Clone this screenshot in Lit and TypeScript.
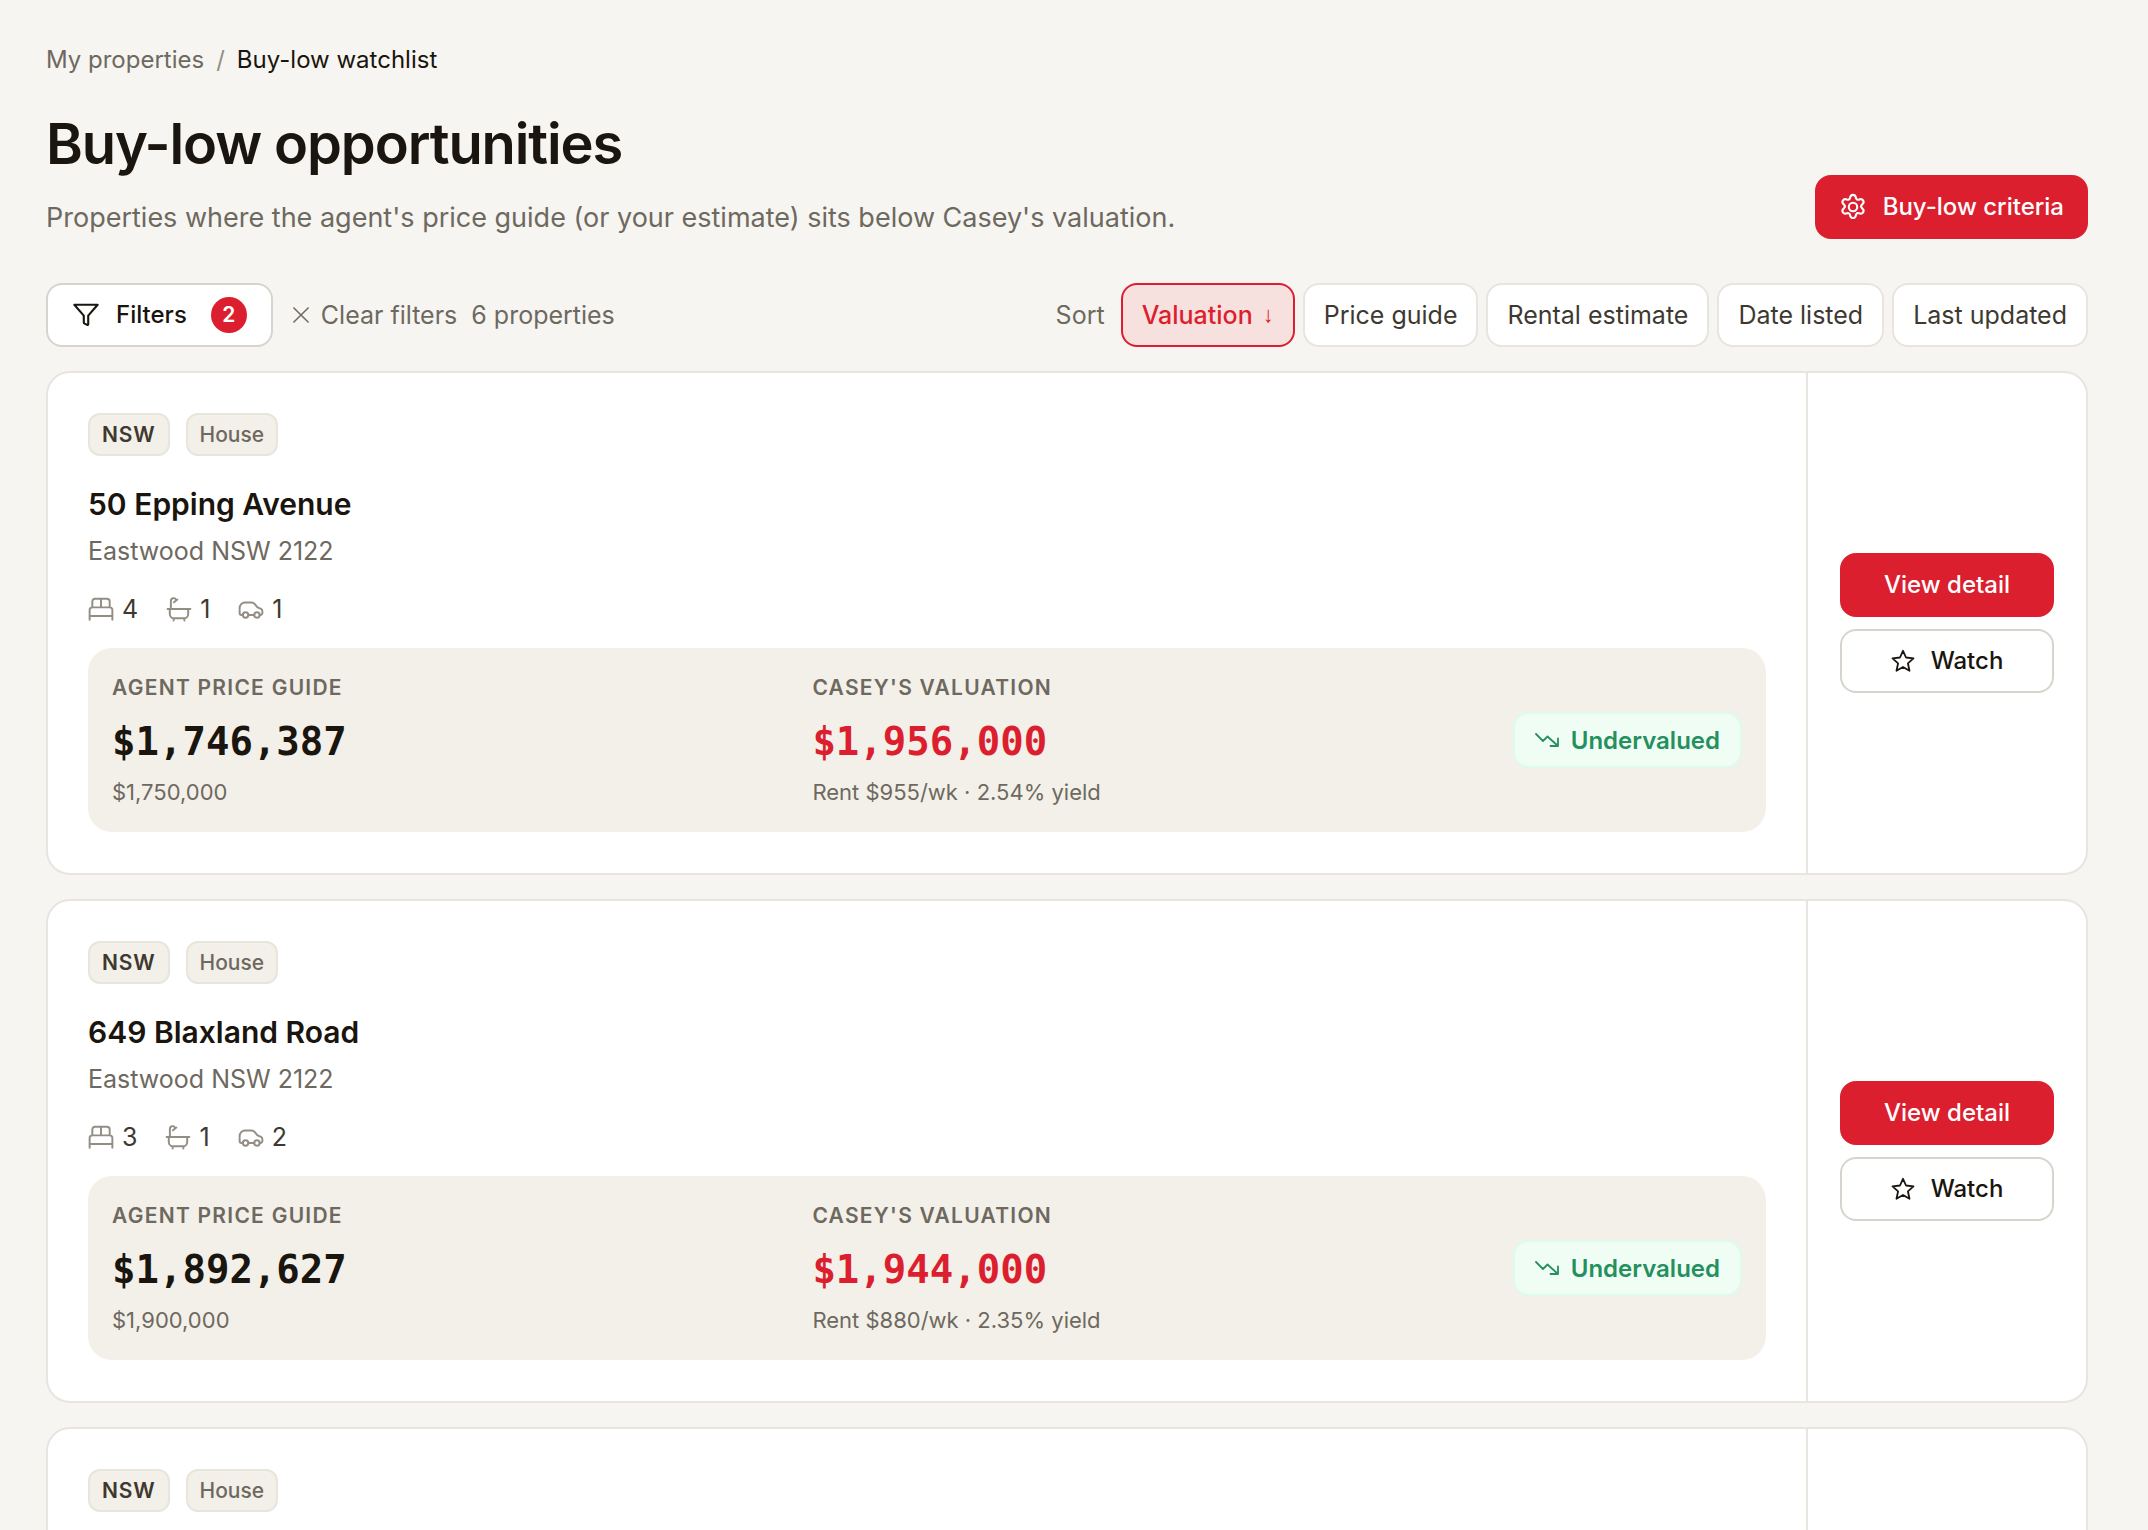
import { LitElement, html, css, svg } from "lit";
import { customElement, property, state } from "lit/decorators.js";

interface Listing {
  id: number;
  region: string;
  kind: string;
  street: string;
  locality: string;
  beds: number;
  baths: number;
  cars: number;
  guide: string;
  guideText: string;
  valuation: string;
  rent: string;
}

const LISTINGS: Listing[] = [
  { id: 1, region: "NSW", kind: "House", street: "50 Epping Avenue", locality: "Eastwood NSW 2122", beds: 4, baths: 1, cars: 1, guide: "$1,746,387", guideText: "$1,750,000", valuation: "$1,956,000", rent: "Rent $955/wk · 2.54% yield" },
  { id: 2, region: "NSW", kind: "House", street: "649 Blaxland Road", locality: "Eastwood NSW 2122", beds: 3, baths: 1, cars: 2, guide: "$1,892,627", guideText: "$1,900,000", valuation: "$1,944,000", rent: "Rent $880/wk · 2.35% yield" },
  { id: 3, region: "NSW", kind: "House", street: "", locality: "", beds: 0, baths: 0, cars: 0, guide: "", guideText: "", valuation: "", rent: "" },
];

const SORTS = ["Valuation", "Price guide", "Rental estimate", "Date listed", "Last updated"];

const ICONS = {
  filter: svg`<path d="M2 3.2h20L13.900 12.500v7.300c0 .6-.4.900-.9.700l-2.200-1.100c-.4-.2-.7-.6-.7-1v-5.900z"/>`,
  close: svg`<path d="M3.500 3.500l17 17M20.500 3.500l-17 17"/>`,
  gear: svg`<circle cx="12" cy="12" r="3.6"/><path d="M9.6 3.6c.3-1.2 1.200-2 2.400-2s2.100.8 2.400 2l.2.800c.3 1 1.300 1.600 2.300 1.300l.9-.3c1.200-.3 2.300.1 2.900 1.100s.4 2.200-.5 3l-.6.600c-.8.8-.8 2 0 2.800l.6.600c.9.800 1.100 2 .5 3s-1.700 1.400-2.900 1.100l-.9-.3c-1-.3-2 .3-2.300 1.300l-.2.800c-.3 1.200-1.200 2-2.400 2s-2.100-.8-2.400-2l-.2-.8c-.3-1-1.300-1.600-2.300-1.300l-.9.300c-1.200.3-2.300-.1-2.900-1.100s-.4-2.200.5-3l.6-.6c.8-.8.8-2 0-2.800l-.6-.6c-.9-.8-1.100-2-.5-3s1.700-1.400 2.900-1.100l.9.300c1 .3 2-.3 2.300-1.300z"/>`,
  bed: svg`<path d="M1.500 22v-9a2.500 2.500 0 0 1 2.500-2.500h16a2.500 2.500 0 0 1 2.500 2.500v9M1.500 18.500h21M4 10.500V5a2.500 2.500 0 0 1 2.500-2.500h11A2.500 2.500 0 0 1 20 5v5.500M12 2.500v8"/>`,
  bath: svg`<path d="M1.500 12h21M3.500 12v4.500a4 4 0 0 0 4 4h9a4 4 0 0 0 4-4V12M7 20.500v2.200M17 20.500v2.200M4.500 12V4.500a2.500 2.500 0 0 1 4.800-1M7.300 5.800l3.200-2.500"/>`,
  car: svg`<circle cx="7" cy="17.500" r="2.500"/><circle cx="17.500" cy="17.500" r="2.500"/><path d="M4.500 17.500H3.300a1.800 1.800 0 0 1-1.800-1.800V11a5 5 0 0 1 5-5h6a4 4 0 0 1 3 1.400L18 10.500l2.800 1.100a2.600 2.600 0 0 1 1.700 2.400v1.700a1.800 1.800 0 0 1-1.800 1.800H20M9.500 17.500h5.500"/>`,
  trend: svg`<path d="M1 6l7 7 4.500-4.500L23 18M15.500 18H23v-7.500"/>`,
  star: svg`<path d="M12 1.800l3 6.700 7.500.8-5.600 5 1.600 7.500-6.500-3.800-6.500 3.800 1.600-7.500-5.600-5 7.500-.8z"/>`,
};

@customElement("ui-icon")
export class UiIcon extends LitElement {
  @property() name: keyof typeof ICONS = "filter";

  static styles = css`
    :host { display: inline-flex; flex: none; }
    svg { width: 24px; height: 24px; fill: none; stroke: currentColor; stroke-width: 1.8; stroke-linecap: round; stroke-linejoin: round; }
    :host([size="small"]) svg { width: 20px; height: 20px; }
    :host([size="medium"]) svg { width: 26px; height: 26px; }
    :host([size="large"]) svg { width: 28px; height: 28px; }
  `;

  render() {
    return html`<svg viewBox="0 0 24 24" aria-hidden="true">${ICONS[this.name]}</svg>`;
  }
}

const buttonStyles = css`
  button, .button {
    box-sizing: border-box;
    height: 64px;
    margin: 0;
    display: inline-flex;
    align-items: center;
    justify-content: center;
    border: 2px solid #d8d4cd;
    border-radius: 16px;
    background: #fff;
    color: #1a150e;
    font: 500 24px/32px Inter, sans-serif;
    text-decoration: none;
    white-space: nowrap;
    cursor: pointer;
  }
  .primary { background: #dc1f2e; border-color: #dc1f2e; color: #fff; }
`;

@customElement("listing-card")
export class ListingCard extends LitElement {
  @property({ attribute: false }) listing!: Listing;
  @state() private watched = false;

  static styles = [buttonStyles, css`
    :host { display: block; }
    .card {
      display: flex;
      min-height: 500px;
      border: 2px solid #e8e4de;
      border-radius: 24px;
      background: #fff;
    }
    .main { flex: 1; min-width: 0; padding: 40px; }
    .tags { display: flex; gap: 16px; }
    .tag {
      box-sizing: border-box;
      height: 43px;
      padding: 0 12px;
      border: 2px solid #e8e4de;
      border-radius: 12px;
      background: #f3f0e9;
      color: #6e695f;
      font-size: 21px;
      line-height: 39px;
      font-weight: 500;
    }
    .region { color: #3e3930; font-weight: 600; letter-spacing: 0.04em; }
    h2 { margin: 28px 0 0; font-size: 30px; line-height: 40px; font-weight: 600; color: #1a150e; }
    .locality { margin: 8px 0 0; font-size: 25px; line-height: 38px; color: #6e695f; }
    .facts { display: flex; gap: 28px; margin: 20px 0 0; padding: 0; list-style: none; }
    .facts li { display: flex; align-items: center; gap: 8px; font-size: 25px; line-height: 38px; color: #3e3930; }
    .facts ui-icon { color: #938e83; }
    .panel {
      display: grid;
      grid-template-columns: 1fr 1fr auto;
      align-items: center;
      gap: 24px;
      margin-top: 20px;
      padding: 24px;
      border-radius: 24px;
      background: #f3f0e9;
    }
    .label { font-size: 21px; line-height: 32px; font-weight: 600; letter-spacing: 0.06em; text-transform: uppercase; color: #6e695f; }
    .amount { margin-top: 12px; font: 700 39px/52px Menlo, "DejaVu Sans Mono", monospace; color: #1a150e; }
    .valuation { color: #dc1f2e; }
    .note { margin-top: 8px; font-size: 22px; line-height: 32px; color: #6e695f; }
    .badge {
      display: flex;
      align-items: center;
      gap: 12px;
      box-sizing: border-box;
      height: 56px;
      padding: 0 20px;
      border: 2px solid #dcfce9;
      border-radius: 16px;
      background: #f0fdf5;
      color: #23905e;
      font-size: 24px;
      font-weight: 600;
    }
    .actions {
      box-sizing: border-box;
      width: 280px;
      display: flex;
      flex-direction: column;
      justify-content: center;
      gap: 12px;
      padding: 32px;
      border-left: 2px solid #e8e4de;
    }
    .watch { gap: 16px; }
  `];

  render() {
    const l = this.listing;
    return html`
      <article class="card">
        <div class="main">
          <div class="tags"><span class="tag region">${l.region}</span><span class="tag">${l.kind}</span></div>
          ${l.street ? html`
            <h2>${l.street}</h2>
            <p class="locality">${l.locality}</p>
            <ul class="facts">
              <li><ui-icon name="bed" size="medium"></ui-icon>${l.beds}</li>
              <li><ui-icon name="bath" size="medium"></ui-icon>${l.baths}</li>
              <li><ui-icon name="car" size="medium"></ui-icon>${l.cars}</li>
            </ul>
            <div class="panel">
              <div>
                <div class="label">Agent price guide</div>
                <div class="amount">${l.guide}</div>
                <div class="note">${l.guideText}</div>
              </div>
              <div>
                <div class="label">Casey's valuation</div>
                <div class="amount valuation">${l.valuation}</div>
                <div class="note">${l.rent}</div>
              </div>
              <div class="badge"><ui-icon name="trend"></ui-icon>Undervalued</div>
            </div>` : null}
        </div>
        <div class="actions">
          ${l.street ? html`
            <a class="button primary" href="#listing-${l.id}">View detail</a>
            <button class="watch" type="button" aria-pressed=${this.watched} @click=${() => (this.watched = !this.watched)}>
              <ui-icon name="star"></ui-icon>Watch
            </button>` : null}
        </div>
      </article>`;
  }
}

@customElement("app-root")
export class AppRoot extends LitElement {
  @state() private sort = "Valuation";

  static styles = [buttonStyles, css`
    :host {
      display: block;
      box-sizing: border-box;
      height: 100vh;
      overflow: hidden;
      padding: 40px 60px 0 46px;
      background: #f7f5f1;
      color: #1a150e;
      font-family: Inter, sans-serif;
    }
    .crumbs { display: flex; gap: 12px; font-size: 24px; line-height: 40px; }
    .crumbs a { color: #6e695f; text-decoration: none; }
    .slash { color: #938e83; }
    header { display: flex; align-items: flex-end; justify-content: space-between; }
    h1 { margin: 28px 0 0; font-size: 56px; line-height: 72px; font-weight: 600; letter-spacing: -0.02em; }
    .lead { margin: 16px 0 0; font-size: 27px; line-height: 43px; color: #6e695f; }
    .criteria { gap: 16px; padding: 0 22px; }
    .toolbar { display: flex; align-items: center; justify-content: space-between; margin: 44px 0 24px; }
    .group { display: flex; align-items: center; }
    .filters { gap: 16px; padding: 0 24px; }
    .count {
      width: 36px;
      height: 36px;
      margin-left: 8px;
      border-radius: 50%;
      background: #dc1f2e;
      color: #fff;
      font-size: 21px;
      line-height: 36px;
      font-weight: 600;
      text-align: center;
    }
    .clear { gap: 10px; padding: 0; margin: 0 14px 0 18px; border: 0; background: none; color: #6e695f; font-weight: 400; font-size: 25px; }
    .total, .sort-label { font-size: 25px; color: #6e695f; }
    .sorts { gap: 8px; }
    .sort-label { margin-right: 8px; }
    .sort { padding: 0 19px; border-color: #e8e4de; color: #3e3930; font-weight: 400; font-size: 25px; }
    .sort[aria-pressed="true"] { gap: 10px; border-color: #dc1f2e; background: #f7e1df; color: #dc1f2e; font-weight: 500; }
    .arrow { font: 700 22px/32px "Liberation Sans", sans-serif; }
    .list { display: grid; gap: 24px; }
  `];

  render() {
    return html`
      <nav class="crumbs" aria-label="Breadcrumb">
        <a href="#properties">My properties</a><span class="slash">/</span><span aria-current="page">Buy-low watchlist</span>
      </nav>
      <header>
        <div>
          <h1>Buy-low opportunities</h1>
          <p class="lead">Properties where the agent's price guide (or your estimate) sits below Casey's valuation.</p>
        </div>
        <button class="primary criteria" type="button"><ui-icon name="gear" size="large"></ui-icon>Buy-low criteria</button>
      </header>
      <div class="toolbar">
        <div class="group">
          <button class="filters" type="button"><ui-icon name="filter" size="large"></ui-icon>Filters<span class="count">2</span></button>
          <button class="clear" type="button"><ui-icon name="close" size="small"></ui-icon>Clear filters</button>
          <span class="total">6 properties</span>
        </div>
        <div class="group sorts">
          <span class="sort-label">Sort</span>
          ${SORTS.map((name) => html`
            <button class="sort" type="button" aria-pressed=${this.sort === name} @click=${() => (this.sort = name)}>
              ${name}${this.sort === name ? html`<span class="arrow">↓</span>` : null}
            </button>`)}
        </div>
      </div>
      <main class="list">${LISTINGS.map((l) => html`<listing-card .listing=${l}></listing-card>`)}</main>`;
  }
}
